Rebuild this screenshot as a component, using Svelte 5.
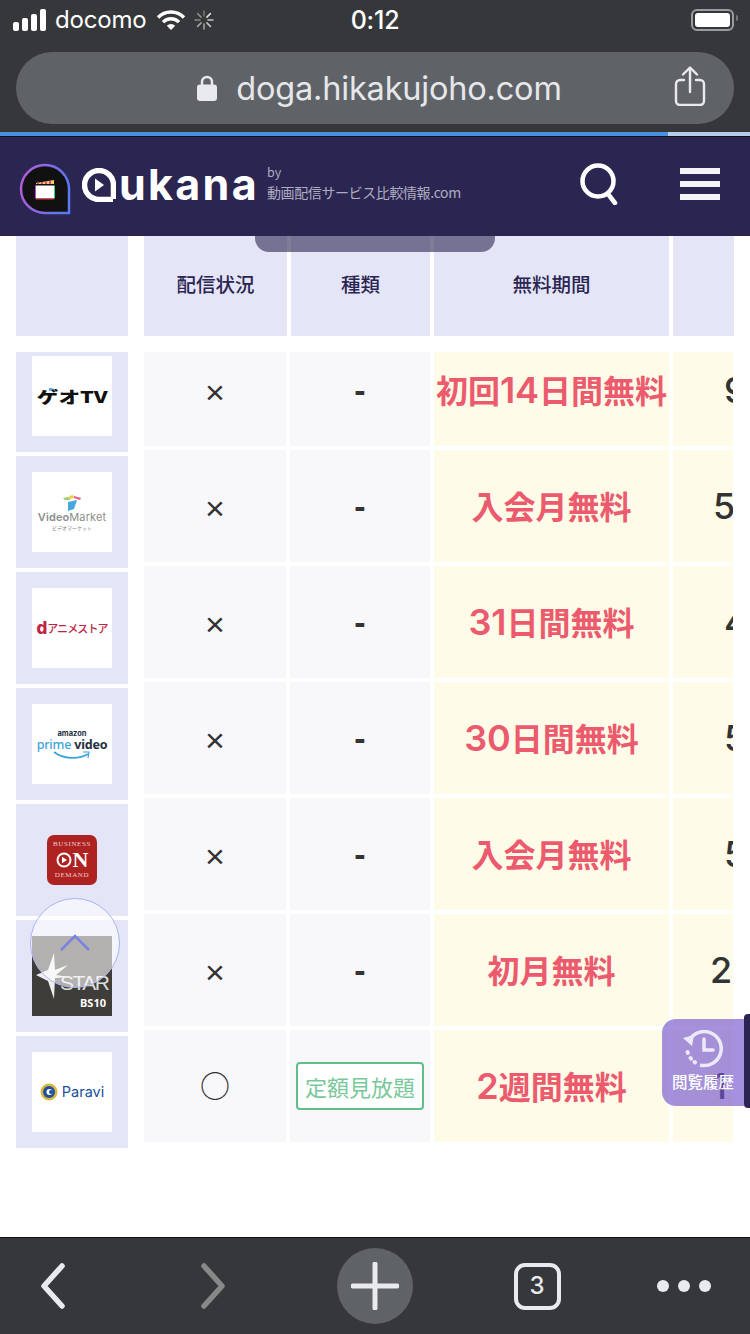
<script>
  const names = ['geo', 'vm', 'da', 'pv', 'bod', 'star', 'par'];
  const rows = [
    { mark: '×', kind: '-', pre: '初回', num: '14', post: '日間無料', price: '9', pad: 51 },
    { mark: '×', kind: '-', pre: '入会月無料', num: '', post: '', price: '5', pad: 40 },
    { mark: '×', kind: '-', pre: '', num: '31', post: '日間無料', price: '4', pad: 51 },
    { mark: '×', kind: '-', pre: '', num: '30', post: '日間無料', price: '5', pad: 51 },
    { mark: '×', kind: '-', pre: '入会月無料', num: '', post: '', price: '5', pad: 51 },
    { mark: '×', kind: '-', pre: '初月無料', num: '', post: '', price: '2', pad: 37 },
    { mark: '○', kind: '定額見放題', pre: '', num: '2', post: '週間無料', price: '1', pad: 39 }
  ];
</script>

<div class="phone">
  <div class="chrome">
    <div class="status">
      <div class="st-left">
        <svg width="34" height="22" viewBox="0 0 34 22"><g fill="#fff"><rect x="0" y="13" width="6" height="9" rx="2"/><rect x="9" y="9" width="6" height="13" rx="2"/><rect x="18" y="5" width="6" height="17" rx="2"/><rect x="27" y="0" width="6" height="22" rx="2"/></g></svg>
        <span class="carrier">docomo</span>
        <svg class="wifi" width="30" height="22" viewBox="0 0 30 22"><g fill="none" stroke="#fff" stroke-width="3.4"><path d="M2 8.500a18 18 0 0 1 26 0"/><path d="M7 13.200a11 11 0 0 1 16 0"/></g><path d="M10.800 16.800a6 6 0 0 1 8.400 0L15 21z" fill="#fff"/></svg>
        <svg width="20" height="20" viewBox="0 0 20 20"><g stroke-width="1.500" stroke-linecap="round"><path d="M10 1v5" stroke="#77787a"/><path d="M3.600 3.600l3.500 3.500M1 10h5" stroke="#8a8b8d"/><path d="M3.600 16.400l3.500-3.500M10 14v5" stroke="#a5a6a8"/><path d="M12.900 12.900l3.500 3.500M14 10h5" stroke="#c4c5c7"/><path d="M12.900 7.100l3.500-3.500" stroke="#e2e3e5"/></g></svg>
      </div>
      <span class="time">0:12</span>
      <div class="battery"><span class="cell"></span></div>
    </div>
    <div class="urlbar">
      <div class="url">
        <svg width="20" height="26" viewBox="0 0 20 26"><path d="M5 11V7a5 5 0 0 1 10 0v4" fill="none" stroke="#e9eaee" stroke-width="2.400"/><rect y="9.500" width="20" height="16.500" rx="3" fill="#e9eaee"/></svg>
        <span class="urltext">doga.hikakujoho.com</span>
      </div>
      <svg class="share" width="32" height="40" viewBox="0 0 32 40"><g fill="none" stroke="#e9eaee" stroke-width="2.400" stroke-linecap="round" stroke-linejoin="round"><path d="M10 14H6a4 4 0 0 0-4 4v17a4 4 0 0 0 4 4h20a4 4 0 0 0 4-4V18a4 4 0 0 0-4-4h-4"/><path d="M16 26V2M9 8.500l7-7 7 7"/></g></svg>
    </div>
  </div>
  <div class="progress"><span class="fill"></span></div>

  <header class="site">
    <div class="brand">
      <svg class="pin" width="52" height="52" viewBox="0 0 52 52">
        <defs><linearGradient id="g" x1="0" y1="0" x2="1" y2="0.200"><stop offset="0" stop-color="#b95ad8"/><stop offset="1" stop-color="#5a78f0"/></linearGradient></defs>
        <path d="M50 50H26A24 24 0 1 1 50 26z" fill="#111" stroke="url(#g)" stroke-width="2.500"/>
        <g transform="translate(16 17)"><path d="M1 3 19 0v4H1z" fill="#e4d84a"/><path d="M3 2.500v1.500M7 2v2M11 1.500v2.500M15 1v3" stroke="#e0409a" stroke-width="2"/><rect x="1" y="5.500" width="18" height="13" fill="#fff"/><path d="M.500 5.500v13" stroke="#d040e0" stroke-width="1"/><path d="M19.500 5.500v13" stroke="#3c8" stroke-width="1"/><path d="M1 19h18" stroke="#e33" stroke-width="1"/></g>
      </svg>
      <div class="wordmark">
        <svg width="34" height="34" viewBox="0 0 34 34"><path d="M31 31.500H17A14.500 14.500 0 1 1 31.500 17v14" fill="none" stroke="#fff" stroke-width="5.500"/><path d="M13 10.500l9 6.500-9 6.500z" fill="#fff"/></svg>
        <span>ukana</span>
      </div>
      <div class="by"><span class="by1">by</span><span class="by2">動画配信サービス比較情報.com</span></div>
    </div>
    <div class="tools">
      <svg width="40" height="42" viewBox="0 0 40 42"><g fill="none" stroke="#fff" stroke-width="4.500" stroke-linecap="round"><circle cx="18" cy="18" r="15.500"/><path d="M28 31l7 9"/></g></svg>
      <div class="burger"><span></span><span></span><span></span></div>
    </div>
  </header>

  <main class="content">
    <div class="sheet">
      <div class="head">
        <div class="corner"></div>
        <div class="th">配信状況</div>
        <div class="th">種類</div>
        <div class="th">無料期間</div>
        <div class="th"></div>
      </div>
      <div class="body">
        <div class="names">
          {#each names as logo}
            <div class="c-name">
              {#if logo === 'geo'}
                <div class="tile geo"><span class="arrows">▸▸</span><span class="geot">ゲオTV</span></div>
              {:else if logo === 'vm'}
                <div class="tile vm">
                  <svg width="18" height="16" viewBox="0 0 18 16"><path d="M0 3l6-1 1 3-5 0z" fill="#9c6"/><path d="M6 1l4-1 1 3-4 1z" fill="#ec4"/><path d="M11 1l7 2-1 2-6-2z" fill="#e58"/><path d="M5 7l9-2-3 9-6 2z" fill="#4ad"/></svg>
                  <span class="vm1"><b>Video</b>Market</span><span class="vm2">ビデオマーケット</span>
                </div>
              {:else if logo === 'da'}
                <div class="tile da"><b>d</b><span>アニメストア</span></div>
              {:else if logo === 'pv'}
                <div class="tile pv">
                  <span class="pv1">amazon</span>
                  <span class="pv2"><i>prime</i> video</span>
                  <svg width="38" height="9" viewBox="0 0 38 9"><path d="M1 1c9 7 24 8 34 2" fill="none" stroke="#3ba3dc" stroke-width="1.800"/><path d="M30 1h6l-1 6" fill="none" stroke="#3ba3dc" stroke-width="1.200"/></svg>
                </div>
              {:else if logo === 'bod'}
                <div class="tile clear"><div class="bod">
                  <span class="bod1">BUSINESS</span>
                  <span class="bod2"><svg width="16" height="16" viewBox="0 0 16 16"><circle cx="8" cy="8" r="6.500" fill="none" stroke="#fff" stroke-width="2"/><path d="M6 4.800 11 8l-5 3.200z" fill="#fff"/></svg>N</span>
                  <span class="bod1">DEMAND</span>
                </div></div>
              {:else if logo === 'star'}
                <div class="tile star">
                  <svg class="starmark" width="32" height="46" viewBox="0 0 32 46"><path d="M18 0l1 17 13-5-12 10 13 2-14 1-1 21-6-18L0 22l12-5z" fill="#eee"/></svg>
                  <span class="st1">STAR</span><span class="st2">BS10</span>
                </div>
              {:else}
                <div class="tile par">
                  <svg width="18" height="18" viewBox="0 0 18 18"><circle cx="9" cy="9" r="8.500" fill="#d8b93c"/><circle cx="9" cy="9" r="6" fill="#20509c"/><circle cx="9.500" cy="9" r="3" fill="#fff"/><circle cx="11" cy="9" r="2" fill="#20509c"/></svg>
                  <span>Paravi</span>
                </div>
              {/if}
            </div>
          {/each}
        </div>
        <div class="data">
          {#each rows as r}
            <div class="row">
              <div class="td plain"><span class="mark" class:circle={r.mark === '○'}>{r.mark}</span></div>
              <div class="td plain">
                {#if r.kind === '-'}<span class="dash">-</span>{:else}<span class="badge">{r.kind}</span>{/if}
              </div>
              <div class="td warm"><span class="free">{r.pre}<span class="num">{r.num}</span>{r.post}</span></div>
              <div class="td warm price"><span style="padding-left:{r.pad}px">{r.price}</span></div>
            </div>
          {/each}
        </div>
      </div>
    </div>

    <div class="drop"></div>
    <div class="totop"><svg width="32" height="18" viewBox="0 0 32 18"><path d="M2 16 16 2l14 14" fill="none" stroke="#7a82e0" stroke-width="2.500"/></svg></div>
    <div class="history">
      <svg width="40" height="38" viewBox="0 0 40 38"><g fill="none" stroke="#eee9f8" stroke-width="3.500"><path d="M6 11A17 17 0 1 1 17 35"/><path d="M21 9v11h9" stroke-linecap="round"/><path d="M4.500 22l.4 1M7.500 28l.6.7M11.500 32l.5.4" stroke-linecap="round" stroke-width="4"/></g><path d="M0 8l9 8 2-11z" fill="#eee9f8"/></svg>
      <span>閲覧履歴</span>
    </div>
    <div class="rail"></div>
  </main>

  <footer class="bar">
    <svg width="30" height="50" viewBox="0 0 30 50"><path d="M24 5 6 25l18 20" fill="none" stroke="#e9eaee" stroke-width="5.500" stroke-linecap="round" stroke-linejoin="round"/></svg>
    <svg width="30" height="50" viewBox="0 0 30 50"><path d="M6 5l18 20L6 45" fill="none" stroke="#87888a" stroke-width="5.500" stroke-linecap="round" stroke-linejoin="round"/></svg>
    <div class="plus"><svg width="48" height="48" viewBox="0 0 48 48"><path d="M24 2v44M2 24h44" stroke="#e9eaee" stroke-width="5" stroke-linecap="round"/></svg></div>
    <div class="tabs">3</div>
    <div class="dots"><span></span><span></span><span></span></div>
  </footer>
</div>

<style>
  :global(body) { margin: 0; background: #fff; }
  .phone { width: 750px; height: 1334px; display: flex; flex-direction: column; overflow: hidden; font-family: "Noto Sans CJK JP", "Noto Sans", sans-serif; }

  .chrome { height: 132px; background: #36373b; box-sizing: border-box; padding: 0 16px 8px; display: flex; flex-direction: column; justify-content: space-between; }
  .status { height: 40px; display: flex; align-items: center; justify-content: space-between; position: relative; color: #fff; margin-right: -3px; margin-left: -3px; }
  .st-left { display: flex; align-items: center; }
  .carrier { font: 400 24px/1 Inter, sans-serif; margin: 0 10px 0 8px; letter-spacing: -.2px; }
  .wifi { margin-right: 8px; }
  .time { position: absolute; left: 0; right: 0; text-align: center; font: 500 25px/1 Inter, sans-serif; letter-spacing: -.2px; }
  .battery { width: 35px; height: 14px; padding: 2px; border: 2px solid #9a9b9e; border-radius: 6px; display: flex; margin-right: 3px; position: relative; }
  .battery::after { content: ""; position: absolute; right: -6px; top: 4px; width: 2px; height: 6px; background: #77787a; border-radius: 0 2px 2px 0; }
  .cell { flex: 1; background: #fff; border-radius: 3px; }
  .urlbar { height: 72px; background: #5f6367; border-radius: 36px; display: flex; align-items: center; justify-content: center; position: relative; }
  .url { display: flex; align-items: center; gap: 19px; color: #e6e7ea; font: 400 32.500px/1 Inter, Roboto, sans-serif; letter-spacing: -.2px; padding-left: 9px; }
  .urltext { padding-top: 2px; }
  .share { position: absolute; right: 28px; top: 14px; }
  .progress { height: 4px; background: #b6cdea; border-bottom: 1px solid #111; }
  .fill { display: block; height: 4px; width: 668px; background: #4a90e2; }

  .site { height: 99px; flex: none; background: #2b2552; display: flex; align-items: center; justify-content: space-between; padding: 0 30px 0 19px; box-sizing: border-box; }
  .brand { display: flex; align-items: center; margin-top: 4px; }
  .wordmark { display: flex; align-items: flex-end; margin-left: 11px; color: #fff; height: 38px; margin-top: -12px; }
  .wordmark span { font: 700 43px/36px Inter, sans-serif; letter-spacing: 2.300px; display: block; width: 136px; margin-left: 3px; }
  .by { display: flex; flex-direction: column; color: #aeacc0; margin-left: 12px; margin-top: -12px; }
  .by1 { font-size: 12.500px; line-height: 18px; }
  .by2 { font-size: 14px; line-height: 22px; letter-spacing: -.4px; }
  .tools { display: flex; align-items: center; gap: 60px; margin-top: -6px; }
  .burger { width: 40px; display: flex; flex-direction: column; gap: 7px; }
  .burger span { height: 6px; background: #f4f4f8; }

  .content { flex: 1; position: relative; overflow: hidden; background: #fff; }
  .sheet { padding: 0 16px; }
  .head { display: grid; grid-template-columns: 112px 155px 139px 235px 61px; column-gap: 4px; height: 100px; margin-bottom: 16px; }
  .corner { background: #e4e5f7; }
  .corner + .th { margin-left: 12px; }
  .th { background: #e4e5f7; display: flex; align-items: center; justify-content: center; font-size: 19.500px; font-weight: 500; color: #2b2552; line-height: 1; padding-bottom: 4px; box-sizing: border-box; }
  .body { display: flex; gap: 16px; }
  .names { display: flex; flex-direction: column; gap: 4px; width: 112px; flex: none; }
  .c-name { background: #e4e5f7; height: 112px; box-sizing: border-box; padding-top: 16px; display: flex; justify-content: center; }
  .c-name:first-child { height: 100px; padding-top: 4px; }
  .data { display: flex; flex-direction: column; gap: 4px; flex: 1; }
  .row { display: grid; grid-template-columns: 142px 140px 235px 60px; column-gap: 4px; height: 112px; }
  .row:first-child { height: 94px; }
  .row:first-child .td { padding-bottom: 18px; box-sizing: border-box; }
  .td { display: flex; align-items: center; justify-content: center; overflow: hidden; }
  .plain { background: #f8f8fb; }
  .warm { background: #fefbe8; }
  .mark { font: 400 34px/1 "Liberation Sans", sans-serif; color: #333; transform: translateY(2px); }
  .mark.circle { font-family: "Noto Sans CJK JP", sans-serif; font-size: 30px; transform: translateY(-2px); }
  .dash { font: 700 34px/1 "Liberation Sans", sans-serif; color: #333; }
  .badge { border: 2px solid #62bd88; border-radius: 4px; width: 128px; height: 48px; box-sizing: border-box; display: flex; align-items: center; justify-content: center; font-size: 22px; color: #79c89b; background: #fff; white-space: nowrap; }
  .free { font: 700 32px/1 "Noto Sans CJK JP", sans-serif; color: #ec5a6e; white-space: nowrap; }
  .num { font: 600 36px/1 Inter, sans-serif; }
  .price { justify-content: flex-start; }
  .price span { font: 500 36px/1 Inter, "Noto Sans CJK JP", sans-serif; color: #333; white-space: nowrap; }

  .tile { width: 80px; height: 80px; background: #fff; display: flex; align-items: center; justify-content: center; flex-direction: column; overflow: hidden; position: relative; box-sizing: border-box; }
  .tile.clear { background: transparent; }
  .geo { font: 900 16px/1 "Noto Sans CJK JP", sans-serif; color: #111; }
  .geot { transform: scaleX(1.350); white-space: nowrap; }
  .arrows { position: absolute; top: 30px; left: 17px; font-size: 6px; color: #3a9be0; letter-spacing: -1px; }
  .vm { padding-top: 2px; }
  .vm1 { font: 400 11px/13px Inter, sans-serif; color: #8d8d8d; letter-spacing: .1px; white-space: nowrap; }
  .vm1 b { font-weight: 600; }
  .vm2 { font-size: 5px; line-height: 8px; color: #888; }
  .da { flex-direction: row; color: #c02545; }
  .da b { font: 800 17px/1 Inter, sans-serif; }
  .da span { font-size: 11px; font-weight: 500; letter-spacing: -.9px; white-space: nowrap; }
  .pv { line-height: 1; }
  .pv1 { font: 700 7.500px/9px Inter, sans-serif; color: #232f3e; }
  .pv2 { font: 700 12.500px/13px "Noto Sans", sans-serif; color: #232f3e; white-space: nowrap; letter-spacing: -.2px; }
  .pv2 i { font-style: normal; color: #3ba3dc; font-weight: 500; }
  .bod { width: 50px; height: 50px; background: #ae2322; border-radius: 7px; display: flex; flex-direction: column; align-items: center; justify-content: center; color: #fff; font-family: "Liberation Serif", serif; }
  .bod1 { font-size: 7px; line-height: 9px; letter-spacing: .6px; color: #ecc; }
  .bod2 { display: flex; align-items: center; font-size: 22px; line-height: 22px; font-weight: 700; gap: 1px; }
  .star { background: #3f3d39; color: #fff; align-items: flex-end; justify-content: flex-end; padding: 0 6px 6px 0; }
  .starmark { position: absolute; left: 4px; top: 17px; }
  .st1 { position: absolute; left: 28px; top: 36px; font: 400 21px/1 "Liberation Sans", sans-serif; color: #ddd; letter-spacing: -1.500px; }
  .st2 { font: 700 11px/1 "Noto Sans", sans-serif; margin-bottom: 2px; }
  .par { flex-direction: row; gap: 4px; color: #20509c; font: 400 14.500px/1 Inter, sans-serif; }

  .drop { position: absolute; left: 255px; top: 0; width: 240px; height: 16px; background: rgba(43, 37, 82, .6); border-radius: 0 0 14px 14px; }
  .totop { position: absolute; left: 30px; top: 662px; width: 90px; height: 90px; box-sizing: border-box; border: 1px solid #aab3f6; border-radius: 50%; background: rgba(255, 255, 255, .6); display: flex; justify-content: center; padding-top: 35px; }
  .totop svg { display: block; }
  .history { position: absolute; left: 662px; top: 783px; width: 82px; height: 87px; border-radius: 14px 0 0 14px; background: rgba(114, 83, 207, .64); display: flex; flex-direction: column; align-items: center; padding-top: 11px; box-sizing: border-box; color: #fff; }
  .history span { font-size: 15.500px; font-weight: 500; line-height: 1; margin-top: 6px; white-space: nowrap; }
  .rail { position: absolute; left: 744px; top: 778px; width: 6px; height: 94px; background: #2b2552; border-radius: 4px 0 0 4px; }

  .bar { height: 97px; flex: none; background: #36373b; border-top: 1px solid #111; box-sizing: border-box; display: grid; grid-template-columns: 106px 214px 110px 214px 80px; align-items: center; justify-items: center; }
  .plus { width: 76px; height: 76px; border-radius: 50%; background: #5f6367; display: flex; align-items: center; justify-content: center; }
  .tabs { width: 47px; height: 47px; box-sizing: border-box; border: 4px solid #e9eaee; border-radius: 11px; color: #e9eaee; display: flex; align-items: center; justify-content: center; font: 500 24px/1 Inter, sans-serif; }
  .dots { display: flex; gap: 9px; }
  .dots span { width: 12px; height: 12px; border-radius: 50%; background: #e9eaee; }
</style>
